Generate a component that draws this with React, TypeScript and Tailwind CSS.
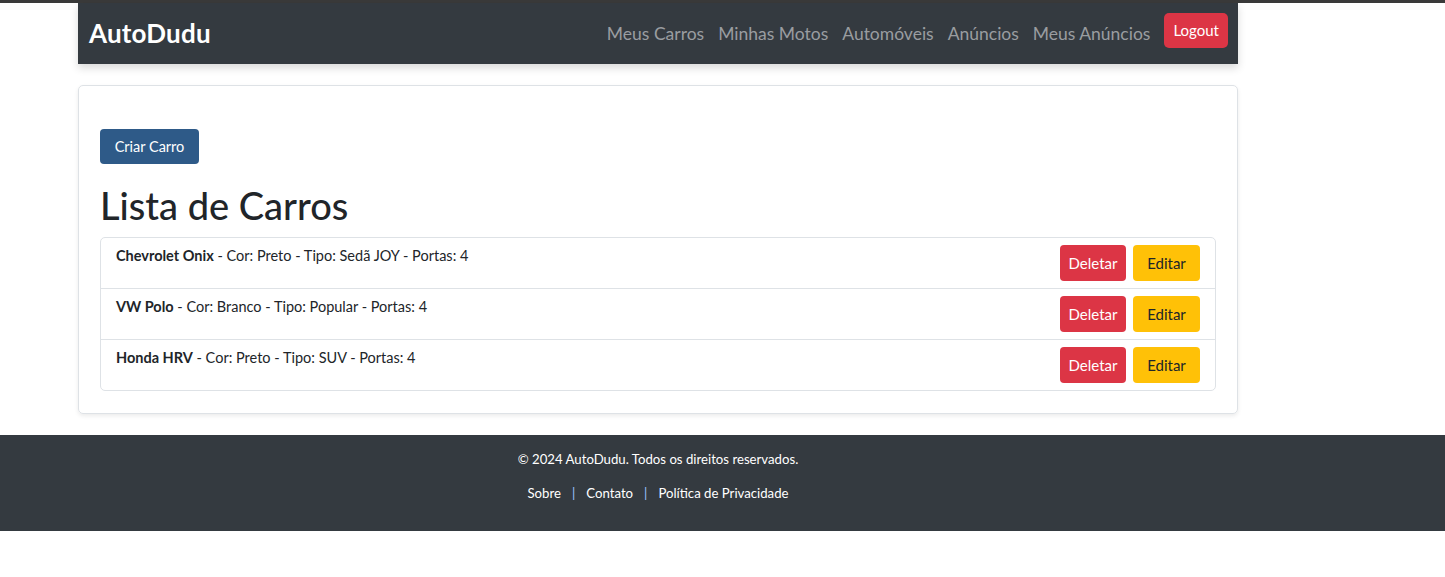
import React from 'react';

interface Carro {
  id: number;
  nome: string;
  cor: string;
  tipo: string;
  portas: number;
}

const carros: Carro[] = [
  { id: 1, nome: 'Chevrolet Onix', cor: 'Preto', tipo: 'Sedã JOY', portas: 4 },
  { id: 2, nome: 'VW Polo', cor: 'Branco', tipo: 'Popular', portas: 4 },
  { id: 3, nome: 'Honda HRV', cor: 'Preto', tipo: 'SUV', portas: 4 },
];

const links = ['Meus Carros', 'Minhas Motos', 'Automóveis', 'Anúncios', 'Meus Anúncios'];

export default function App() {
  return (
    <div className="min-h-screen bg-white font-['Lato',sans-serif] text-[#212529]">
      {/* top strip */}
      <div className="h-[3px] bg-[#3a3a3a]" />

      {/* Navbar */}
      <nav className="ml-[78px] w-[1160px] h-[61px] bg-[#343a40] shadow-[0_4px_8px_rgba(0,0,0,0.15)] flex items-center justify-between pl-[11px] pr-[10px]">
        <span className="text-white font-bold text-[26px] tracking-[0.2px]">AutoDudu</span>
        <div className="flex items-center">
          {links.map((l) => (
            <a key={l} className="text-[17.5px] text-[#9a9da0] px-[7px] pt-[1px]">
              {l}
            </a>
          ))}
          <button className="ml-[7px] mb-[6px] h-[35px] px-[9px] rounded-[5px] bg-[#dc3545] text-white text-[15px]">
            Logout
          </button>
        </div>
      </nav>

      {/* Card */}
      <div className="ml-[78px] w-[1160px] mt-[21px] border border-[#dee2e6] rounded-[5px] shadow-[0_2px_4px_rgba(0,0,0,0.08)] px-[21px] pt-[43px] pb-[22px]">
        <button className="h-[35px] w-[99px] rounded-[4px] bg-[#2e5a88] text-white text-[14.5px] pt-[1px]">
          Criar Carro
        </button>
        <h1 className="mt-[17px] mb-[8px] text-[38px] leading-[48px] font-medium">Lista de Carros</h1>

        <ul className="border border-[#dee2e6] rounded-[5px]">
          {carros.map((c, i) => (
            <li
              key={c.id}
              className={`flex items-start justify-between px-[15px] pt-[7px] ${i > 0 ? 'h-[51px] border-t border-[#dee2e6]' : 'h-[50px]'}`}
            >
              <span className="text-[14.5px] leading-[20px] pt-[1px]">
                <strong className="font-bold">{c.nome}</strong> - Cor: {c.cor} - Tipo: {c.tipo} - Portas: {c.portas}
              </span>
              <div className="flex gap-[7px]">
                <button className="h-[36px] w-[66px] rounded-[4px] bg-[#dc3545] text-white text-[15px]">Deletar</button>
                <button className="h-[36px] w-[67px] rounded-[4px] bg-[#ffc107] text-[#212529] text-[15px]">Editar</button>
              </div>
            </li>
          ))}
        </ul>
      </div>

      {/* Footer */}
      <footer className="mt-[21px] h-[96px] bg-[#343a40] text-white text-[13.2px]">
        <div className="ml-[78px] w-[1160px] text-center pt-[14px]">
          <p className="leading-[20px]">© 2024 AutoDudu. Todos os direitos reservados.</p>
          <p className="leading-[20px] mt-[14px]">
            <a className="text-white">Sobre</a>
            <span className="mx-[11px] text-[#9ec5fe]">|</span>
            <a className="text-white">Contato</a>
            <span className="mx-[11px] text-[#9ec5fe]">|</span>
            <a className="text-white">Política de Privacidade</a>
          </p>
        </div>
      </footer>
    </div>
  );
}
